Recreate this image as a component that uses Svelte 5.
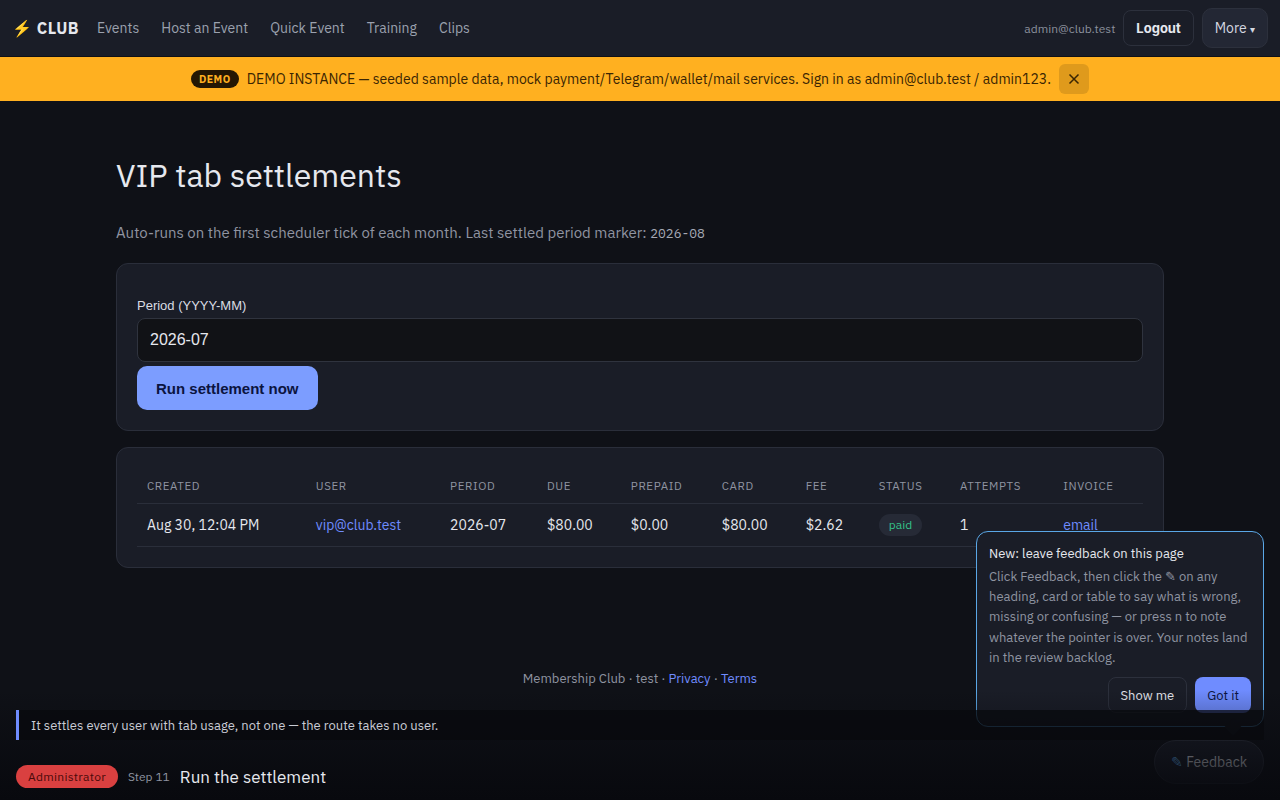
<script lang="ts">
	const links = ['Events', 'Host an Event', 'Quick Event', 'Training', 'Clips'];
	const columns = ['Created', 'User', 'Period', 'Due', 'Prepaid', 'Card', 'Fee', 'Status', 'Attempts', 'Invoice'];
</script>

<div class="page">
	<nav class="topbar">
		<a class="brand" href="#home"><span class="bolt">⚡</span> CLUB</a>
		<div class="links">
			{#each links as link}
				<a href="#{link}">{link}</a>
			{/each}
		</div>
		<div class="account">
			<span class="who">admin@club.test</span>
			<button class="logout">Logout</button>
			<button class="more">More <span class="caret">▾</span></button>
		</div>
	</nav>

	<div class="banner">
		<span class="demo">DEMO</span>
		<span>DEMO INSTANCE — seeded sample data, mock payment/Telegram/wallet/mail services. Sign in as admin@club.test / admin123.</span>
		<button class="dismiss" aria-label="Dismiss">
			<svg width="12" height="12" viewBox="0 0 12 12"><path d="M1.5 1.5l9 9M10.5 1.5l-9 9" stroke="currentColor" stroke-width="1.5" fill="none" /></svg>
		</button>
	</div>

	<main>
		<h1>VIP tab settlements</h1>
		<p class="lead">Auto-runs on the first scheduler tick of each month. Last settled period marker: <code>2026-08</code></p>

		<section class="card form">
			<label for="period">Period (YYYY-MM)</label>
			<input id="period" value="2026-07" />
			<button class="run">Run settlement now</button>
		</section>

		<section class="card">
			<table>
				<thead>
					<tr>
						{#each columns as col}
							<th>{col}</th>
						{/each}
					</tr>
				</thead>
				<tbody>
					<tr>
						<td>Aug 30, 12:04 PM</td>
						<td><a href="#vip">vip@club.test</a></td>
						<td>2026-07</td>
						<td>$80.00</td>
						<td>$0.00</td>
						<td>$80.00</td>
						<td>$2.62</td>
						<td><span class="badge">paid</span></td>
						<td>1</td>
						<td><a href="#email">email</a></td>
					</tr>
				</tbody>
			</table>
		</section>
	</main>

	<footer>Membership Club · test · <a href="#privacy">Privacy</a> · <a href="#terms">Terms</a></footer>

	<aside class="popover">
		<strong>New: leave feedback on this page</strong>
		<p>Click Feedback, then click the ✎ on any heading, card or table to say what is wrong, missing or confusing — or press n to note whatever the pointer is over. Your notes land in the review backlog.</p>
		<div class="actions">
			<button class="show">Show me</button>
			<button class="got">Got it</button>
		</div>
		<span class="arrow"></span>
	</aside>
	<button class="feedback"><span class="pen">✎</span> Feedback</button>

	<div class="tour">
		<div class="hint">It settles every user with tab usage, not one — the route takes no user.</div>
		<div class="step">
			<span class="role">Administrator</span>
			<span class="count">Step 11</span>
			<span class="title">Run the settlement</span>
		</div>
	</div>
</div>

<style>
	:global(body) {
		margin: 0;
		background: #0f1117;
		color: #e6e8ee;
		font-family: 'IBM Plex Sans', Inter, 'Noto Sans', sans-serif;
	}

	.page {
		position: relative;
		height: 800px;
		overflow: hidden;
	}

	a {
		text-decoration: none;
		color: #6f8cff;
	}

	button {
		font-family: inherit;
		cursor: pointer;
	}

	.topbar {
		display: flex;
		align-items: center;
		height: 56px;
		padding: 0 12px;
		background: #1a1d27;
		border-bottom: 1px solid #0f1117;
	}

	.brand {
		color: #e6e8ee;
		font-weight: 700;
		font-size: 16px;
		letter-spacing: 0.5px;
		margin-right: 8px;
		white-space: nowrap;
	}

	.bolt {
		font-size: 16px;
	}

	.links {
		display: flex;
		gap: 22px;
		margin-left: 10px;
	}

	.links a {
		color: #9ba1ae;
		font-size: 14px;
	}

	.account {
		display: flex;
		align-items: center;
		margin-left: auto;
		gap: 8px;
	}

	.who {
		color: #8b909c;
		font-size: 12px;
	}

	.logout {
		height: 36px;
		padding: 0 12px;
		background: transparent;
		color: #e6e8ee;
		border: 1px solid #2c303c;
		border-radius: 8px;
		font-family: Inter, sans-serif;
		font-weight: 700;
		font-size: 13px;
	}

	.more {
		height: 40px;
		padding: 0 12px;
		background: #232734;
		color: #d5d8e0;
		border: 1px solid #2c303c;
		border-radius: 10px;
		font-size: 14px;
	}

	.caret {
		font-size: 10px;
	}

	.banner {
		display: flex;
		align-items: center;
		justify-content: center;
		gap: 8px;
		height: 44px;
		background: #ffb020;
		color: #3a2503;
		font-size: 14px;
	}

	.demo {
		background: #241703;
		color: #ffb020;
		font-size: 10.5px;
		font-weight: 700;
		letter-spacing: 0.5px;
		padding: 2px 8px;
		border-radius: 999px;
	}

	.dismiss {
		display: flex;
		align-items: center;
		justify-content: center;
		width: 30px;
		height: 30px;
		padding: 0;
		border: 0;
		border-radius: 6px;
		background: #df9a1c;
		color: #3a2503;
	}

	main {
		width: 1048px;
		margin: 0 auto;
		padding-top: 56px;
	}

	h1 {
		margin: 0 0 29px;
		font-size: 32px;
		line-height: 36px;
		font-weight: 400;
		color: #e6e8ee;
	}

	.lead {
		margin: 0 0 18px;
		font-size: 15px;
		line-height: 22px;
		color: #8f94a1;
	}

	code {
		font-family: 'IBM Plex Mono', 'DejaVu Sans Mono', monospace;
		font-size: 13px;
		color: #a5a9b5;
	}

	.card {
		box-sizing: border-box;
		padding: 20px;
		margin-bottom: 16px;
		background: #1a1d27;
		border: 1px solid #2a2e3a;
		border-radius: 12px;
	}

	.form {
		height: 168px;
		padding-top: 34px;
		font-family: 'Liberation Sans', Arial, sans-serif;
	}

	label {
		display: block;
		font-size: 13px;
		line-height: 16px;
		margin-bottom: 4px;
		color: #d9dce3;
	}

	input {
		display: block;
		box-sizing: border-box;
		width: 100%;
		height: 44px;
		padding: 0 12px;
		margin-bottom: 4px;
		background: #111216;
		border: 1px solid #2f333e;
		border-radius: 8px;
		color: #e6e8ee;
		font: 16px 'Liberation Sans', Arial, sans-serif;
	}

	.run {
		height: 44px;
		padding: 0 19px;
		border: 0;
		border-radius: 10px;
		background: #7c9dff;
		color: #0b1440;
		font: 700 15px 'Liberation Sans', Arial, sans-serif;
	}

	table {
		width: 100%;
		border-collapse: collapse;
	}

	th {
		padding: 10px;
		text-align: left;
		font-size: 11.5px;
		font-weight: 400;
		letter-spacing: 0.6px;
		text-transform: uppercase;
		color: #8f94a1;
		border-bottom: 1px solid #2a2e3a;
	}

	td {
		padding: 10px;
		font-size: 14px;
		line-height: 18px;
		white-space: nowrap;
		color: #e6e8ee;
		border-bottom: 1px solid #2a2e3a;
	}

	.badge {
		display: inline-block;
		padding: 2px 10px;
		border-radius: 999px;
		background: #262a36;
		color: #34c28a;
		font-size: 12px;
	}

	footer {
		margin-top: 102px;
		text-align: center;
		font-size: 13px;
		color: #8f94a1;
	}

	.popover {
		position: absolute;
		box-sizing: border-box;
		left: 976px;
		top: 531px;
		width: 288px;
		height: 196px;
		padding: 13px 12px;
		background: #1a1d27;
		border: 1px solid #5aa7e6;
		border-radius: 12px;
	}

	.popover strong {
		display: block;
		font-size: 13px;
		font-weight: 400;
		color: #e6e8ee;
	}

	.popover p {
		margin: 5px 0 9px;
		font-size: 13px;
		line-height: 20.2px;
		color: #8f94a1;
	}

	.actions {
		display: flex;
		justify-content: flex-end;
		gap: 8px;
	}

	.actions button {
		height: 36px;
		padding: 0 12px;
		border-radius: 8px;
		font-size: 13px;
	}

	.show {
		background: transparent;
		border: 1px solid #2c303c;
		color: #e6e8ee;
	}

	.got {
		background: #6f8cff;
		border: 0;
		color: #0b1440;
	}

	.arrow {
		position: absolute;
		right: 24px;
		bottom: -7px;
		width: 12px;
		height: 12px;
		background: #1a1d27;
		transform: rotate(45deg);
	}

	.feedback {
		position: absolute;
		left: 1154px;
		top: 740px;
		width: 110px;
		height: 44px;
		padding: 0;
		border: 1px solid #2c303c;
		border-radius: 22px;
		background: #1a1d27;
		color: #d0d3db;
		font-size: 14px;
	}

	.pen {
		color: #5aa7e6;
	}

	.tour {
		position: absolute;
		inset: auto 0 0 0;
		box-sizing: border-box;
		height: 110px;
		padding: 20px 16px 0;
		background: linear-gradient(to bottom, rgba(8, 9, 14, 0) 0, #08090e 100%);
	}

	.hint {
		display: flex;
		align-items: center;
		box-sizing: border-box;
		height: 30px;
		padding-left: 12px;
		background: rgba(8, 9, 14, 0.75);
		border-left: 3px solid #6f8cff;
		font-size: 13px;
		color: #c9ccd5;
	}

	.step {
		display: flex;
		align-items: center;
		gap: 10px;
		margin-top: 25px;
	}

	.role {
		padding: 4px 12px;
		border-radius: 999px;
		background: #d94040;
		color: #4a0a0a;
		font-size: 12px;
		letter-spacing: 0.3px;
	}

	.count {
		color: #8f94a1;
		font-size: 12px;
	}

	.title {
		font-size: 17px;
		color: #e6e8ee;
	}
</style>
